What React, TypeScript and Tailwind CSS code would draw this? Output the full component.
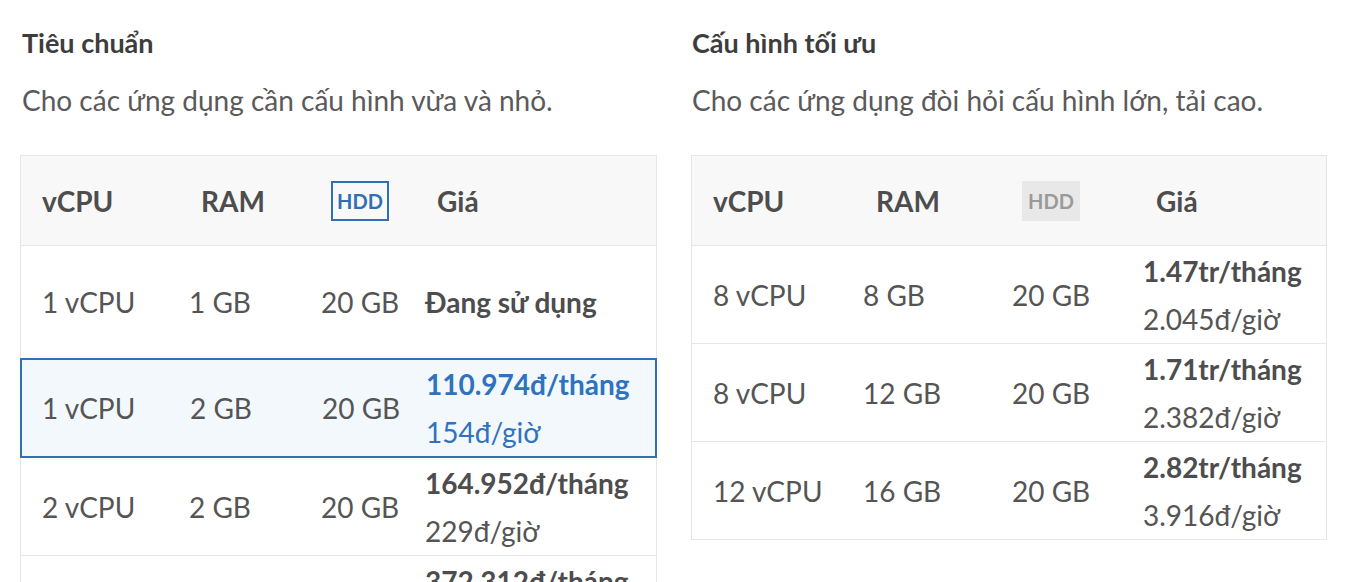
import React from "react";

interface Plan {
  cpu: string;
  ram: string;
  disk: string;
  month?: string;
  hour?: string;
  status?: string;
  selected?: boolean;
  tall?: boolean;
}

interface PlanTableProps {
  cols: string;
  headPad: [string, string, string];
  hddActive: boolean;
  plans: Plan[];
}

const standardPlans: Plan[] = [
  { cpu: "1 vCPU", ram: "1 GB", disk: "20 GB", status: "Đang sử dụng", tall: true },
  { cpu: "1 vCPU", ram: "2 GB", disk: "20 GB", month: "110.974đ/tháng", hour: "154đ/giờ", selected: true },
  { cpu: "2 vCPU", ram: "2 GB", disk: "20 GB", month: "164.952đ/tháng", hour: "229đ/giờ" },
  { cpu: "2 vCPU", ram: "4 GB", disk: "20 GB", month: "372.312đ/tháng", hour: "517đ/giờ" },
];

const optimizedPlans: Plan[] = [
  { cpu: "8 vCPU", ram: "8 GB", disk: "20 GB", month: "1.47tr/tháng", hour: "2.045đ/giờ" },
  { cpu: "8 vCPU", ram: "12 GB", disk: "20 GB", month: "1.71tr/tháng", hour: "2.382đ/giờ" },
  { cpu: "12 vCPU", ram: "16 GB", disk: "20 GB", month: "2.82tr/tháng", hour: "3.916đ/giờ" },
];

const PlanTable: React.FC<PlanTableProps> = ({ cols, headPad, hddActive, plans }) => {
  return (
    <div>
      <div
        className={`grid ${cols} h-[91px] items-center border border-[#e6e6e6] bg-[#f8f8f8] text-[28px] font-bold text-[#4d4d4d]`}
      >
        <div className="pl-[21px]">vCPU</div>
        <div className={headPad[0]}>RAM</div>
        <div className={headPad[1]}>
          {hddActive ? (
            <span className="flex h-[40px] w-[58px] items-center justify-center border-2 border-[#2f6fb5] text-[20px] text-[#2f6fb5]">
              HDD
            </span>
          ) : (
            <span className="flex h-[40px] w-[58px] items-center justify-center bg-[#e8e8e8] text-[20px] text-[#9a9a9a]">
              HDD
            </span>
          )}
        </div>
        <div className={headPad[2]}>Giá</div>
      </div>
      {plans.map((p, i) => (
        <div
          key={i}
          className={`grid ${cols} items-center text-[28px] ${
            p.selected
              ? "-mt-px h-[100px] border-2 border-[#3070b8] bg-[#f3f8fd] text-[#555]"
              : `${p.tall ? "h-[113px]" : "h-[98px]"} border-x border-b border-[#e6e6e6] text-[#555]`
          }`}
        >
          <div className={p.selected ? "pl-[20px]" : "pl-[21px]"}>{p.cpu}</div>
          <div className="pl-[21px]">{p.ram}</div>
          <div className="pl-[21px]">{p.disk}</div>
          <div className="pl-[21px]">
            {p.status ? (
              <span className="font-bold text-[#4d4d4d]">{p.status}</span>
            ) : (
              <div className={`leading-[48px] ${p.selected ? "text-[#2f72bd]" : ""}`}>
                <div className={`font-bold ${p.selected ? "" : "text-[#4d4d4d]"}`}>{p.month}</div>
                <div>{p.hour}</div>
              </div>
            )}
          </div>
        </div>
      ))}
    </div>
  );
};

export default function App() {
  return (
    <div className="h-[582px] overflow-hidden bg-white font-['Lato',sans-serif]">
      <div className="flex gap-[34px] px-[20px] pt-[27px]">
        <div className="w-[637px]">
          <h2 className="pl-[2px] text-[27px] font-bold leading-[32px] text-[#3d3d3d]">Tiêu chuẩn</h2>
          <p className="mt-[22px] pl-[2px] text-[28px] leading-[38px] text-[#5a5a5a]">
            Cho các ứng dụng cần cấu hình vừa và nhỏ.
          </p>
          <div className="mt-[36px]">
            <PlanTable
              cols="grid-cols-[147px_132px_104px_1fr]"
              headPad={["pl-[33px]", "pl-[31px]", "pl-[33px]"]}
              hddActive={true}
              plans={standardPlans}
            />
          </div>
        </div>
        <div className="w-[636px]">
          <h2 className="pl-[1px] text-[27px] font-bold leading-[32px] text-[#3d3d3d]">Cấu hình tối ưu</h2>
          <p className="mt-[22px] pl-[1px] text-[28px] leading-[38px] text-[#5a5a5a]">
            Cho các ứng dụng đòi hỏi cấu hình lớn, tải cao.
          </p>
          <div className="mt-[36px]">
            <PlanTable
              cols="grid-cols-[150px_149px_131px_1fr]"
              headPad={["pl-[34px]", "pl-[31px]", "pl-[34px]"]}
              hddActive={false}
              plans={optimizedPlans}
            />
          </div>
        </div>
      </div>
    </div>
  );
}
